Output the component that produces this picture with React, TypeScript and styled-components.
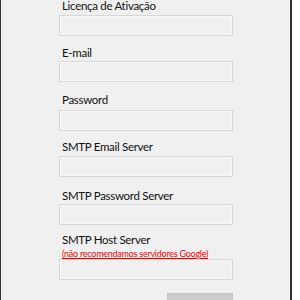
import React from "react";
import styled, { createGlobalStyle } from "styled-components";

const Global = createGlobalStyle`
  html, body { margin: 0; padding: 0; background: #ffffff; }
  body { font-family: Lato, "Noto Sans", sans-serif; }
`;

const Window = styled.div`
  width: 289px;
  height: 300px;
  box-sizing: content-box;
  background: #f0f0f0;
  border-left: 1px solid #333333;
  border-right: 2px solid #333333;
  overflow: hidden;
`;

const Form = styled.div`
  display: flex;
  flex-direction: column;
  padding-left: 58px;
`;

const Field = styled.div<{ $top: number }>`
  display: flex;
  flex-direction: column;
  margin-top: ${(p) => p.$top}px;
`;

const Label = styled.label`
  display: block;
  font-size: 11.5px;
  letter-spacing: -0.3px;
  line-height: 11px;
  height: 11px;
  color: #111111;
  padding-left: 3px;
  white-space: nowrap;
`;

const Note = styled.span`
  display: block;
  margin-top: 4px;
  font-size: 9px;
  letter-spacing: -0.25px;
  line-height: 10px;
  height: 10px;
  color: #ff0000;
  text-decoration: underline;
  padding-left: 3px;
  white-space: nowrap;
`;

const Input = styled.input<{ $gap: number }>`
  box-sizing: border-box;
  width: 174px;
  height: 21px;
  margin: ${(p) => p.$gap}px 0 0 0;
  padding: 0;
  background: #f0f0f0;
  border: 1px solid #d7d7d7;
  box-shadow: inset 0 0 0 1px #f7f7f7;
  outline: none;
`;

const Footer = styled.div`
  display: flex;
  justify-content: flex-end;
  width: 174px;
  margin-top: 13px;
`;

const Button = styled.button`
  width: 66px;
  height: 23px;
  background: #cccccc;
  border: 1px solid #c4c4c4;
  padding: 0;
`;

const fields = [
  { label: "Licença de Ativação", top: 0, gap: 4 },
  { label: "E-mail", top: 11, gap: 3 },
  { label: "Password", top: 12, gap: 5 },
  { label: "SMTP Email Server", top: 10, gap: 4 },
  { label: "SMTP Password Server", top: 13, gap: 3 },
];

export default function App() {
  return (
    <>
      <Global />
      <Window>
        <Form>
          {fields.map((f) => (
            <Field key={f.label} $top={f.top}>
              <Label>{f.label}</Label>
              <Input $gap={f.gap} />
            </Field>
          ))}
          <Field $top={9}>
            <Label>SMTP Host Server</Label>
            <Note>(não recomendamos servidores Google)</Note>
            <Input $gap={0} />
          </Field>
          <Footer>
            <Button />
          </Footer>
        </Form>
      </Window>
    </>
  );
}
